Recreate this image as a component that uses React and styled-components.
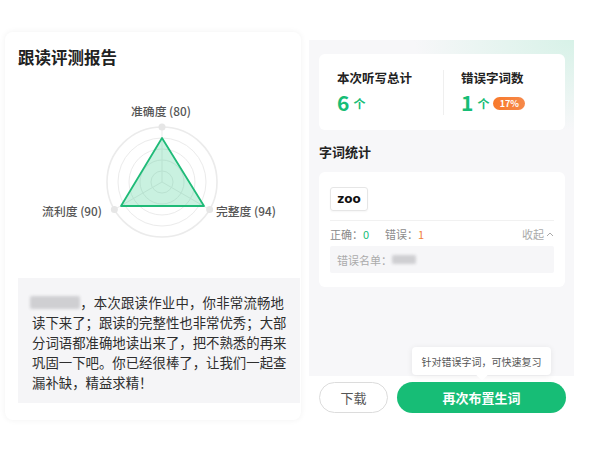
import React from "react";
import styled, { createGlobalStyle } from "styled-components";

const GREEN = "#17bd76";
const ORANGE = "#f07f3c";
const FONT = `"Noto Sans CJK SC", "Noto Sans", sans-serif`;

const Global = createGlobalStyle`
  html, body { margin: 0; padding: 0; background: #fff; }
  body { font-family: ${FONT}; width: 600px; height: 450px; overflow: hidden; }
  * { box-sizing: border-box; }
`;

const Page = styled.div`
  display: flex;
  align-items: flex-start;
  width: 600px;
  height: 450px;
`;

const ReportCard = styled.section`
  margin: 32px 0 0 5px;
  width: 296px;
  height: 388px;
  background: #fff;
  border-radius: 8px;
  box-shadow: 0 0 6px rgba(0, 0, 0, 0.06);
  display: flex;
  flex-direction: column;
`;

const CardTitle = styled.h1`
  margin: 0;
  padding: 14px 0 0 13px;
  font-size: 16.5px;
  line-height: 22px;
  font-weight: 700;
  color: #222;
`;

const ChartSvg = styled.svg`
  display: block;
  margin-top: 24px;
`;

const Comment = styled.p`
  margin: 18px 0 0 13px;
  width: 282px;
  padding: 14px 16px 11px 14px;
  background: #f5f5f7;
  font-size: 13.4px;
  line-height: 20px;
  color: #2e2e2e;
`;

const CommentLine = styled.span`
  display: block;
  white-space: nowrap;
  text-align: justify;
  text-align-last: ${(p) => (p.$last ? "left" : "justify")};
  text-justify: inter-character;
`;

const Blurred = styled.span`
  display: inline-block;
  width: ${(p) => p.$w}px;
  height: ${(p) => p.$h}px;
  margin-left: ${(p) => p.$ml || 0}px;
  background: #cfcfd2;
  filter: blur(1.5px);
  vertical-align: ${(p) => p.$va || "-1px"};
  border-radius: 2px;
`;

const RightColumn = styled.div`
  position: relative;
  margin: 40px 0 0 8px;
  width: 265px;
  display: flex;
  flex-direction: column;
`;

const Panel = styled.div`
  height: 336px;
  padding: 14px 9px 0 10px;
  background:
    radial-gradient(ellipse 160px 90px at 100% 0%, rgba(205, 240, 226, 0.75), rgba(205, 240, 226, 0) 100%),
    #f7f7f9;
`;

const StatsCard = styled.div`
  height: 76px;
  background: #fff;
  border-radius: 6px;
  display: flex;
  align-items: center;
`;

const StatCol = styled.div`
  width: ${(p) => (p.$grow ? "auto" : "124px")};
  flex: ${(p) => (p.$grow ? 1 : "none")};
  padding-left: ${(p) => p.$pl}px;
  display: flex;
  flex-direction: column;
`;

const StatDivider = styled.div`
  width: 1px;
  height: 45px;
  background: #efefef;
`;

const StatLabel = styled.div`
  font-size: 12.5px;
  line-height: 16px;
  font-weight: 600;
  color: #222;
`;

const StatValue = styled.div`
  margin-top: 4px;
  height: 24px;
  display: flex;
  align-items: center;
  color: ${GREEN};
`;

const BigNum = styled.span`
  font-size: 21px;
  font-weight: 700;
  line-height: 24px;
`;

const Unit = styled.span`
  margin-left: 4px;
  font-size: 12px;
  font-weight: 700;
  margin-top: 3px;
`;

const Badge = styled.span`
  margin-left: 4px;
  margin-top: 2px;
  width: 32px;
  height: 13px;
  border-radius: 7px;
  background: linear-gradient(90deg, #f8792b, #f6894a);
  color: #fff;
  font-size: 9px;
  font-weight: 700;
  line-height: 13px;
  text-align: center;
`;

const SectionTitle = styled.h2`
  margin: 13px 0 11px 0;
  font-size: 13px;
  line-height: 18px;
  font-weight: 700;
  color: #222;
`;

const WordCard = styled.div`
  height: 115px;
  padding: 15px 11px 14px 11px;
  background: #fff;
  border-radius: 6px;
  display: flex;
  flex-direction: column;
`;

const WordChip = styled.div`
  width: 38px;
  height: 24px;
  border: 1px solid #e6e6e6;
  border-radius: 3px;
  display: flex;
  align-items: center;
  justify-content: center;
  font-family: "DejaVu Sans", sans-serif;
  font-weight: 700;
  font-size: 12px;
  color: #111;
  box-shadow: 0 1px 2px rgba(0, 0, 0, 0.04);
`;

const ThinLine = styled.div`
  margin-top: 9px;
  height: 1px;
  background: #f1f1f1;
`;

const ResultRow = styled.div`
  height: 25px;
  display: flex;
  align-items: center;
  font-size: 11px;
  color: #8a8a8a;
`;

const ResultItem = styled.span`
  margin-right: 16px;
`;

const Count = styled.span`
  color: ${(p) => p.$color};
`;

const Collapse = styled.span`
  margin-left: auto;
  display: flex;
  align-items: center;
  gap: 2px;
  color: #aaa;
  font-size: 11px;
`;

const ErrorList = styled.div`
  height: 27px;
  padding-left: 7px;
  background: #f6f6f8;
  border-radius: 2px;
  display: flex;
  align-items: center;
  font-size: 11px;
  color: #ababab;
`;

const ButtonRow = styled.div`
  margin-top: 6px;
  padding: 0 8px 0 10px;
  display: flex;
  gap: 9px;
`;

const Button = styled.button`
  height: 31px;
  border-radius: 16px;
  font-family: ${FONT};
  font-size: 13px;
  cursor: pointer;
  padding: 0;
  ${(p) =>
    p.$primary
      ? `flex: 1; background: ${GREEN}; border: none; color: #fff; font-weight: 700;`
      : `width: 69px; background: #fff; border: 1px solid #dcdcdc; color: #555; font-weight: 400;`}
`;

const Tooltip = styled.div`
  position: absolute;
  left: 103px;
  top: 307px;
  width: 139px;
  height: 28px;
  background: #fff;
  border-radius: 4px;
  box-shadow: 0 1px 6px rgba(0, 0, 0, 0.08);
  display: flex;
  align-items: center;
  justify-content: center;
  font-size: 10px;
  color: #555;
  &::after {
    content: "";
    position: absolute;
    left: 66px;
    bottom: -4px;
    width: 8px;
    height: 8px;
    background: #fff;
    transform: rotate(45deg);
  }
`;

function RadarChart() {
  const cx = 157;
  const cy = 90;
  const R = 55;
  const ang = [-90, 150, 30].map((a) => (a * Math.PI) / 180);
  const outer = ang.map((a) => [cx + R * Math.cos(a), cy + R * Math.sin(a)]);
  const rings = [11, 22, 33, 44, 55];
  return (
    <ChartSvg width="296" height="168" viewBox="0 0 296 168">
      {rings.map((r) => (
        <circle key={r} cx={cx} cy={cy} r={r} fill="none" stroke="#ebebeb" strokeWidth={r === 55 ? 1.6 : 1} />
      ))}
      {outer.map(([x, y], i) => (
        <line key={i} x1={cx} y1={cy} x2={x} y2={y} stroke="#ebebeb" strokeWidth="1" />
      ))}
      {outer.map(([x, y], i) => (
        <circle key={"d" + i} cx={x} cy={y} r="3.5" fill="#e6e6e6" />
      ))}
      <polygon
        points="157,46 116,114 199,114"
        fill="rgba(40, 200, 130, 0.25)"
        stroke="#1fbb78"
        strokeWidth="1.8"
        strokeLinejoin="round"
      />
      <g fontFamily={FONT} fontSize="11.8" fontWeight="500" fill="#555">
        <text x="156" y="24" textAnchor="middle">准确度 (80)</text>
        <text x="97" y="124" textAnchor="end">流利度 (90)</text>
        <text x="211" y="124" textAnchor="start">完整度 (94)</text>
      </g>
    </ChartSvg>
  );
}

const commentLines = [
  "读下来了；跟读的完整性也非常优秀；大部",
  "分词语都准确地读出来了，把不熟悉的再来",
  "巩固一下吧。你已经很棒了，让我们一起查",
];

export default function App() {
  return (
    <>
      <Global />
      <Page>
        <ReportCard>
          <CardTitle>跟读评测报告</CardTitle>
          <RadarChart />
          <Comment>
            <CommentLine>
              <Blurred $w={50} $h={13} $ml={-2} />
              ，本次跟读作业中，你非常流畅地
            </CommentLine>
            {commentLines.map((l) => (
              <CommentLine key={l}>{l}</CommentLine>
            ))}
            <CommentLine $last>漏补缺，精益求精！</CommentLine>
          </Comment>
        </ReportCard>

        <RightColumn>
          <Panel>
            <StatsCard>
              <StatCol $pl={18}>
                <StatLabel>本次听写总计</StatLabel>
                <StatValue>
                  <BigNum>6</BigNum>
                  <Unit>个</Unit>
                </StatValue>
              </StatCol>
              <StatDivider />
              <StatCol $grow $pl={17}>
                <StatLabel>错误字词数</StatLabel>
                <StatValue>
                  <BigNum>1</BigNum>
                  <Unit>个</Unit>
                  <Badge>17%</Badge>
                </StatValue>
              </StatCol>
            </StatsCard>

            <SectionTitle>字词统计</SectionTitle>

            <WordCard>
              <WordChip>zoo</WordChip>
              <ThinLine />
              <ResultRow>
                <ResultItem>
                  正确：<Count $color={GREEN}>0</Count>
                </ResultItem>
                <ResultItem>
                  错误：<Count $color={ORANGE}>1</Count>
                </ResultItem>
                <Collapse>
                  收起
                  <svg width="8" height="6" viewBox="0 0 8 6">
                    <polyline points="1,5 4,2 7,5" fill="none" stroke="#aaa" strokeWidth="1" />
                  </svg>
                </Collapse>
              </ResultRow>
              <ErrorList>
                错误名单：<Blurred $w={24} $h={9} $va="-1px" />
              </ErrorList>
            </WordCard>
          </Panel>

          <ButtonRow>
            <Button>下载</Button>
            <Button $primary>再次布置生词</Button>
          </ButtonRow>

          <Tooltip>针对错误字词，可快速复习</Tooltip>
        </RightColumn>
      </Page>
    </>
  );
}
